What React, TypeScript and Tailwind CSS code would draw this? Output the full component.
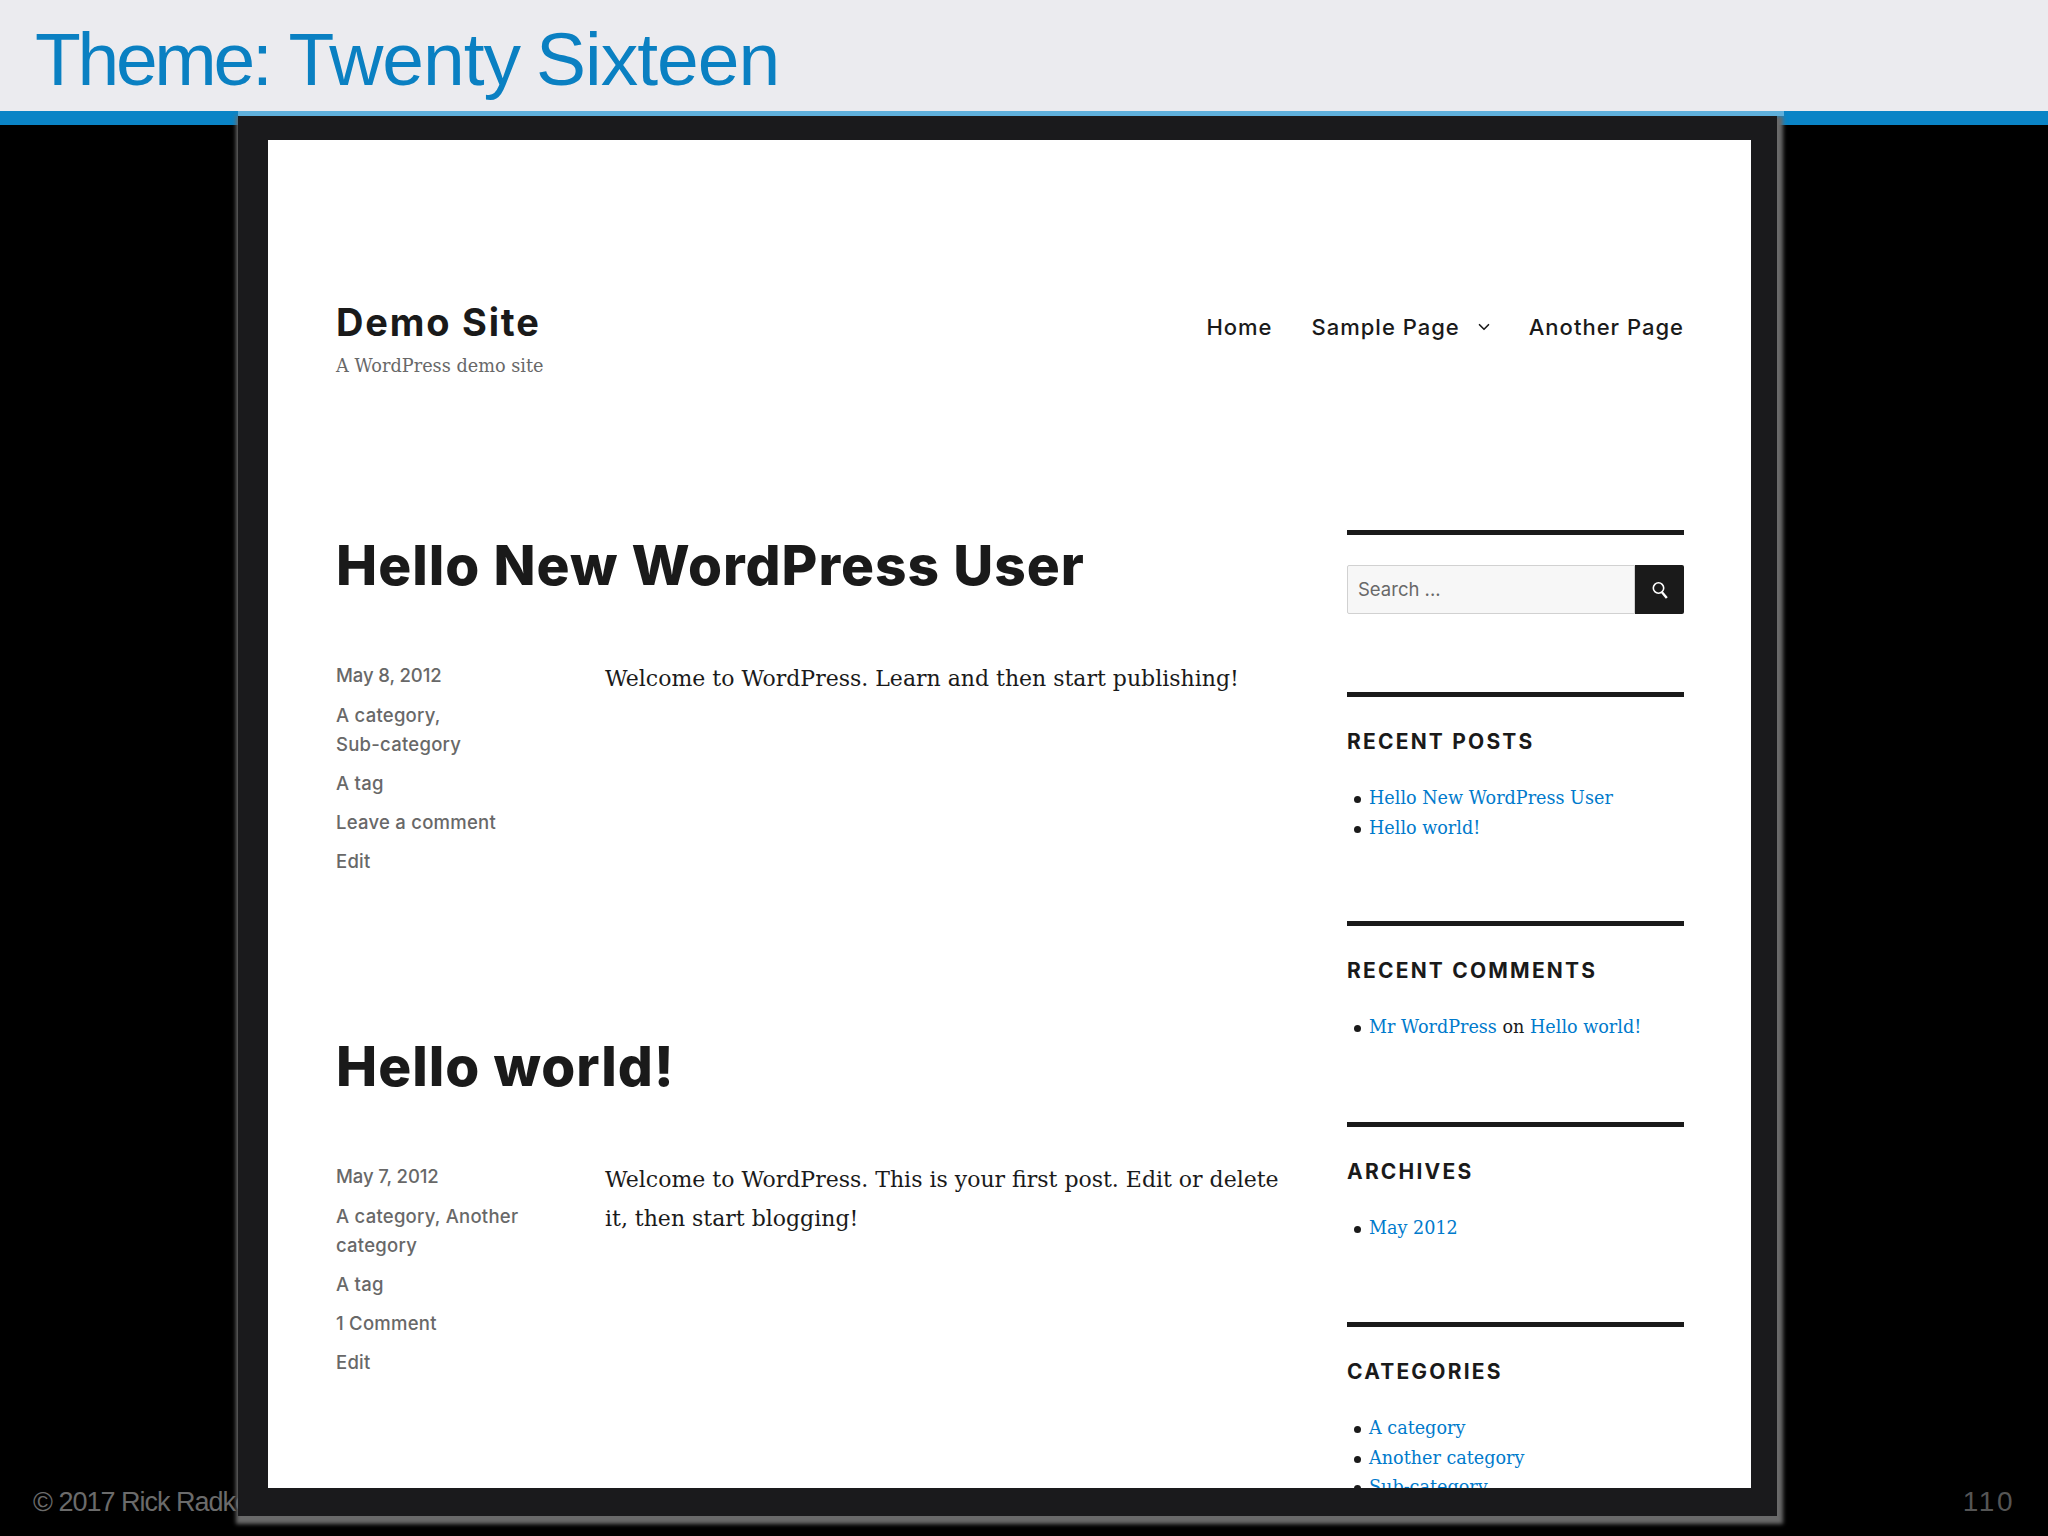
import { ChevronDown } from "lucide-react";

const sans = "font-['Inter',sans-serif]";
const serif = "font-['DejaVu_Serif',serif]";

const Meta = ({ lines }: { lines: string[][] }) => (
  <div className={`w-[269px] shrink-0 text-[18.5px] text-[#686868] ${sans} font-medium`}>
    {lines.map((group, i) => (
      <div key={i} className={`leading-[29px] ${i === 0 ? "mb-[11px] tracking-[-0.1px]" : "mb-[10px] tracking-[0.25px]"}`}>
        {group.map((line) => (
          <div key={line}>{line}</div>
        ))}
      </div>
    ))}
  </div>
);

const Post = ({
  title,
  meta,
  body,
}: {
  title: string;
  meta: string[][];
  body: string[];
}) => (
  <article className="h-[501px] pt-[3px]">
    <h2 className={`text-[55px] leading-[64px] font-extrabold tracking-[1px] text-[#1a1a1a] ${sans}`}>{title}</h2>
    <div className="flex mt-[64px]">
      <Meta lines={meta} />
      <div className={`-mt-[2px] text-[22px] leading-[39px] text-[#1a1a1a] ${serif}`}>
        {body.map((line) => (
          <div key={line}>{line}</div>
        ))}
      </div>
    </div>
  </article>
);

const Widget = ({
  title,
  children,
  height,
}: {
  title: string;
  children: React.ReactNode;
  height: string;
}) => (
  <section className={`border-t-[5px] border-[#1a1a1a] ${height}`}>
    <h3 className={`mt-[31px] text-[21px] leading-[28px] font-bold tracking-[2.2px] text-[#1a1a1a] ${sans}`}>{title}</h3>
    <ul className={`mt-[28px] pl-[22px] text-[17.6px] leading-[29.5px] text-[#1a1a1a] ${serif}`}>
      {children}
    </ul>
  </section>
);

const Li = ({ children }: { children: React.ReactNode }) => (
  <li className="relative before:absolute before:-left-[15px] before:top-[12px] before:w-[7px] before:h-[7px] before:rounded-full before:bg-[#1a1a1a]">
    {children}
  </li>
);

const A = ({ children }: { children: React.ReactNode }) => <a className="text-[#007acc]">{children}</a>;

export default function App() {
  return (
    <div className="relative w-[2048px] h-[1536px] bg-black overflow-hidden font-['Liberation_Sans',sans-serif]">
      <header className="h-[111px] bg-[#ebebef] pl-[35px] pt-[16px]">
        <h1 className="flex gap-[19px] text-[75px] leading-[86px] text-[#0a80c2]">
          <span className="tracking-[-3.3px]">Theme:</span>
          <span className="tracking-[-1px]">Twenty</span>
          <span className="tracking-[-1px] -ml-[3px]">Sixteen</span>
        </h1>
      </header>
      <div className="h-[14px] bg-[#0a84c6]" />

      <footer className="flex justify-between items-center mt-[1361px] pl-[33px] pr-[33px] text-[27px] leading-[32px] text-[#6b6b6b]">
        <span className="tracking-[-1px]">© 2017 Rick Radko</span>
        <span className="text-[28px] tracking-[2.5px] text-[#555]">110</span>
      </footer>

      {/* recording window sits on top of the slide */}
      <div className="absolute left-[238px] top-[116px] w-[1539px] h-[1400px] bg-[#1a1a1c] shadow-[2px_4px_4px_4px_#6a6a6a] pl-[30px] pr-[26px] pt-[24px] pb-[28px]">
        <div className="absolute left-0 -right-[7px] -top-[5px] h-[5px] bg-[#5fb0dc]" />
        <div className="bg-white h-full overflow-hidden pl-[68px] pr-[67px]">
          <div className="flex justify-between pt-[158px] h-[390px]">
            <div>
              <div className={`text-[38px] leading-[48px] font-bold tracking-[1.8px] text-[#1a1a1a] ${sans}`}>Demo Site</div>
              <div className={`mt-[6px] text-[17.7px] leading-[28px] text-[#686868] ${serif}`}>A WordPress demo site</div>
            </div>
            <nav className={`flex items-center h-[28px] mt-[15px] text-[22px] font-medium tracking-[1px] text-[#1a1a1a] ${sans}`}>
              <span>Home</span>
              <span className="ml-[39px]">Sample Page</span>
              <ChevronDown className="ml-[15px] w-[18px] h-[18px]" strokeWidth={2.2} />
              <span className="ml-[36px]">Another Page</span>
            </nav>
          </div>

          <div className="flex justify-between">
            <main className="w-[945px]">
              <Post
                title="Hello New WordPress User"
                meta={[["May 8, 2012"], ["A category,", "Sub-category"], ["A tag"], ["Leave a comment"], ["Edit"]]}
                body={["Welcome to WordPress. Learn and then start publishing!"]}
              />
              <Post
                title="Hello world!"
                meta={[["May 7, 2012"], ["A category, Another", "category"], ["A tag"], ["1 Comment"], ["Edit"]]}
                body={["Welcome to WordPress. This is your first post. Edit or delete", "it, then start blogging!"]}
              />
            </main>

            <aside className="w-[337px] shrink-0">
              <section className="border-t-[5px] border-[#1a1a1a] h-[162px]">
                <div className="flex mt-[30px] h-[49px]">
                  <div className={`flex-1 flex items-center pl-[10px] bg-[#f7f7f7] border border-[#d1d1d1] rounded-l-[2px] text-[18.5px] text-[#686868] ${sans}`}>
                    Search ...
                  </div>
                  <div className="w-[49px] flex items-center justify-center bg-[#1a1a1a] rounded-r-[2px]">
                    <svg viewBox="0 0 20 20" className="w-[20px] h-[20px]" fill="none" stroke="white">
                      <circle cx="8.5" cy="8" r="5.2" strokeWidth="1.6" />
                      <path d="M12 12.2 L16.8 18" strokeWidth="2.4" />
                    </svg>
                  </div>
                </div>
              </section>
              <Widget title="RECENT POSTS" height="h-[229px]">
                <Li><A>Hello New WordPress User</A></Li>
                <Li><A>Hello world!</A></Li>
              </Widget>
              <Widget title="RECENT COMMENTS" height="h-[201px]">
                <Li><A>Mr WordPress</A> on <A>Hello world!</A></Li>
              </Widget>
              <Widget title="ARCHIVES" height="h-[200px]">
                <Li><A>May 2012</A></Li>
              </Widget>
              <Widget title="CATEGORIES" height="h-[200px]">
                <Li><A>A category</A></Li>
                <Li><A>Another category</A></Li>
                <Li><A>Sub-category</A></Li>
              </Widget>
            </aside>
          </div>
        </div>
      </div>
    </div>
  );
}
